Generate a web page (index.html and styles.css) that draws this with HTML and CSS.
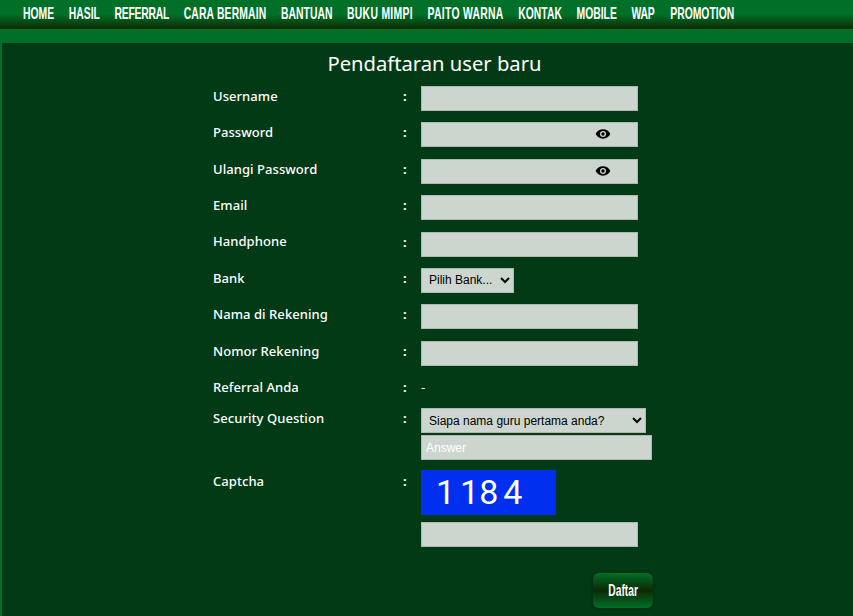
FILE: index.html
```html
<!DOCTYPE html>
<html>
    <head>
        <title>Pendaftaran user baru</title>
        <link rel="stylesheet" href="styles.css">
    </head>
    <body>
        <header class="topbar">
            <nav class="menu">
                <a href="#">HOME</a>
                <a href="#">HASIL</a>
                <a href="#" class="tight">REFERRAL</a>
                <a href="#" class="loose">CARA BERMAIN</a>
                <a href="#">BANTUAN</a>
                <a href="#" class="wide">BUKU MIMPI</a>
                <a href="#" class="wide">PAITO WARNA</a>
                <a href="#">KONTAK</a>
                <a href="#">MOBILE</a>
                <a href="#" class="tight">WAP</a>
                <a href="#" class="last">PROMOTION</a>
            </nav>
        </header>
        <div class="band"></div>
        <main class="content">
            <h1 class="title">Pendaftaran user baru</h1>
            <form class="regform">
                <label class="lbl">Username</label><span class="colon">:</span>
                <div class="val"><input type="text" class="field"></div>

                <label class="lbl">Password</label><span class="colon">:</span>
                <div class="val pw">
                    <input type="password" class="field">
                    <svg class="eye" viewBox="0 0 24 24"><path d="M12 5C7 5 2.7 8 1 12c1.700 4 6 7 11 7s9.300-3 11-7c-1.700-4-6-7-11-7zm0 11.500a4.500 4.500 0 1 1 0-9 4.500 4.500 0 0 1 0 9zm0-7a2.500 2.500 0 1 0 0 5 2.500 2.500 0 0 0 0-5z"/></svg>
                </div>

                <label class="lbl">Ulangi Password</label><span class="colon">:</span>
                <div class="val pw">
                    <input type="password" class="field">
                    <svg class="eye" viewBox="0 0 24 24"><path d="M12 5C7 5 2.7 8 1 12c1.700 4 6 7 11 7s9.300-3 11-7c-1.700-4-6-7-11-7zm0 11.500a4.500 4.500 0 1 1 0-9 4.500 4.500 0 0 1 0 9zm0-7a2.500 2.500 0 1 0 0 5 2.500 2.500 0 0 0 0-5z"/></svg>
                </div>

                <label class="lbl">Email</label><span class="colon">:</span>
                <div class="val"><input type="text" class="field"></div>

                <label class="lbl">Handphone</label><span class="colon">:</span>
                <div class="val"><input type="text" class="field"></div>

                <label class="lbl">Bank</label><span class="colon">:</span>
                <div class="val">
                    <select class="pick bank"><option>Pilih Bank...</option></select>
                </div>

                <label class="lbl">Nama di Rekening</label><span class="colon">:</span>
                <div class="val"><input type="text" class="field"></div>

                <label class="lbl">Nomor Rekening</label><span class="colon">:</span>
                <div class="val"><input type="text" class="field"></div>

                <label class="lbl">Referral Anda</label><span class="colon">:</span>
                <div class="val plain">-</div>

                <label class="lbl">Security Question</label><span class="colon">:</span>
                <div class="val stack">
                    <select class="pick question"><option>Siapa nama guru pertama anda?</option></select>
                    <input type="text" class="field answer" placeholder="Answer">
                </div>

                <label class="lbl lower">Captcha</label><span class="colon lower">:</span>
                <div class="val captcha-box">
                    <div class="captcha">1<span class="gap">1</span>84</div>
                    <input type="text" class="field">
                </div>

                <div class="val submit-row">
                    <button type="button" class="btn"><span class="btn-text">Daftar</span></button>
                </div>
            </form>
        </main>
    </body>
</html>
```

FILE: styles.css
```css
html, body {
    margin: 0;
    height: 100%;
    overflow: hidden;
}
body {
    background-color: #006f27;
    font-family: "Noto Sans", sans-serif;
    color: #fff;
}
.topbar {
    height: 29px;
    background: linear-gradient(to bottom, #006f27 0%, #006f27 50%, #0d2a05 100%);
}
/* no condensed face installed, so the menu is squeezed sideways */
.menu {
    display: flex;
    gap: 24px;
    width: 1200px;
    padding: 4px 0 0 23px;
    transform: scaleX(.61);
    transform-origin: 23px 0;
    white-space: nowrap;
}
.menu a {
    color: #fff;
    text-decoration: none;
    font-family: "Liberation Sans", sans-serif;
    font-weight: bold;
    font-size: 17px;
    line-height: 20px;
}
.menu .tight {
    letter-spacing: -.4px;
}
.menu .loose {
    letter-spacing: .27px;
}
.menu .wide {
    letter-spacing: .5px;
}
.menu .last {
    margin-left: 2px;
}
.band {
    height: 14px;
}
.content {
    margin-left: 2px;
    height: 573px;
    background-color: #013a14;
}
.title {
    margin: 0;
    padding: 5px 0 0 14px;
    height: 38px;
    font-size: 20.2px;
    line-height: 30px;
    font-weight: normal;
    text-align: center;
}
.regform {
    display: grid;
    grid-template-columns: 190px 18px 1fr;
    width: 427px;
    margin-left: 211px;
}
.lbl {
    margin-top: -.2px;
    font-size: 13px;
    font-weight: 500;
    letter-spacing: .06px;
    line-height: 20px;
}
.colon {
    font-size: 13px;
    font-weight: bold;
    line-height: 21px;
}
.lower {
    padding-top: 1px;
}
.val {
    height: 36.4px;
    position: relative;
}
.field {
    display: block;
    box-sizing: border-box;
    width: 217px;
    height: 25px;
    background-color: #cdd6ce;
    border: 1px solid #b0b8b0;
    padding: 0 4px;
    font-family: "Liberation Sans", sans-serif;
    font-size: 12px;
    outline: none;
}
.field::placeholder {
    color: #fff;
    opacity: 1;
}
.pick {
    display: block;
    box-sizing: border-box;
    height: 25px;
    background-color: #cdd6ce;
    border: 1px solid #b0b8b0;
    font-family: "Liberation Sans", sans-serif;
    font-size: 12px;
    color: #000;
    padding-left: 3px;
}
.bank {
    width: 93px;
}
.question {
    width: 225px;
}
.answer {
    width: 231px;
    margin-top: 2px;
}
.eye {
    position: absolute;
    left: 174px;
    top: 4px;
    width: 16px;
    height: 16px;
    fill: #000;
}
.plain {
    height: 31px;
    font-size: 13px;
    line-height: 20px;
}
.stack {
    height: 62px;
}
.captcha-box {
    height: 77px;
}
.captcha {
    width: 135px;
    height: 45px;
    background-color: #002ff0;
    margin-bottom: 7px;
    font-family: Roboto, sans-serif;
    font-size: 34px;
    line-height: 45px;
    letter-spacing: 5px;
    padding-left: 15px;
    box-sizing: border-box;
    white-space: pre;
}
.gap {
    letter-spacing: 0;
}
.submit-row {
    grid-column: 3;
    padding-top: 26px;
    height: auto;
}
.btn {
    display: block;
    margin-left: 172px;
    width: 60px;
    height: 35px;
    border: none;
    border-radius: 6px;
    background: linear-gradient(to bottom, #006f27 0%, #0d2a05 50%, #006f27 100%);
    box-shadow: 0 0 3px #01220c;
    color: #fff;
    font-family: "Liberation Sans", sans-serif;
    font-weight: bold;
    font-size: 16px;
    padding: 0;
}
.btn-text {
    display: inline-block;
    transform: scaleX(.64);
}
```
